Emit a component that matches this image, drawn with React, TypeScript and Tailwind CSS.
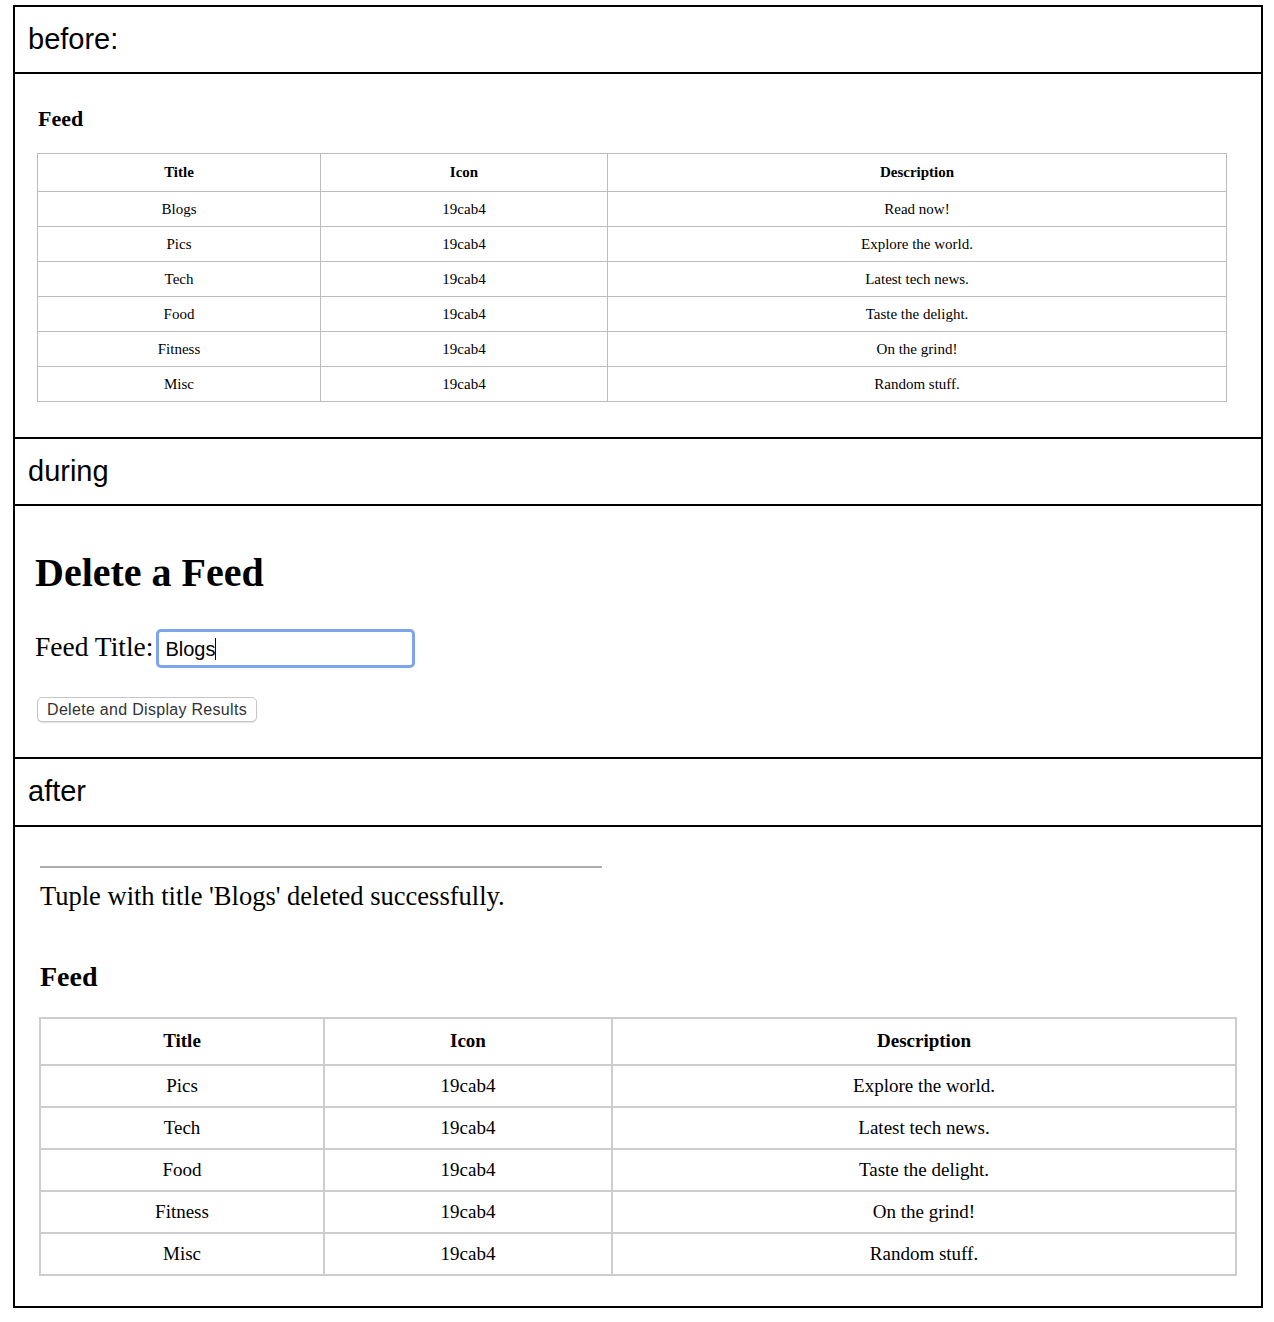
const rowsBefore = [
  { title: "Blogs", icon: "19cab4", desc: "Read now!" },
  { title: "Pics", icon: "19cab4", desc: "Explore the world." },
  { title: "Tech", icon: "19cab4", desc: "Latest tech news." },
  { title: "Food", icon: "19cab4", desc: "Taste the delight." },
  { title: "Fitness", icon: "19cab4", desc: "On the grind!" },
  { title: "Misc", icon: "19cab4", desc: "Random stuff." },
];

const rowsAfter = rowsBefore.slice(1);

function Label({ text, last }: { text: string; last?: boolean }) {
  return (
    <div
      className={
        last
          ? "h-[68px] border-b-2 border-black flex items-center pl-[13px] text-[29px] text-black font-['Liberation_Sans',Arial,sans-serif]"
          : "h-[67px] border-b-2 border-black flex items-center pl-[13px] text-[29px] text-black font-['Liberation_Sans',Arial,sans-serif]"
      }
    >
      {text}
    </div>
  );
}

function SmallFeed() {
  return (
    <table className="table-fixed border-collapse w-[1189px] text-[15px] text-black">
      <colgroup>
        <col className="w-[283px]" />
        <col className="w-[287px]" />
        <col className="w-[619px]" />
      </colgroup>
      <thead>
        <tr className="h-[38px]">
          <th className="border border-[#bcbcbc] font-bold text-center p-0">Title</th>
          <th className="border border-[#bcbcbc] font-bold text-center p-0">Icon</th>
          <th className="border border-[#bcbcbc] font-bold text-center p-0">Description</th>
        </tr>
      </thead>
      <tbody>
        {rowsBefore.map((r) => (
          <tr key={r.title} className="h-[35px]">
            <td className="border border-[#bcbcbc] text-center p-0">{r.title}</td>
            <td className="border border-[#bcbcbc] text-center p-0">{r.icon}</td>
            <td className="border border-[#bcbcbc] text-center p-0">{r.desc}</td>
          </tr>
        ))}
      </tbody>
    </table>
  );
}

function LargeFeed() {
  return (
    <table className="table-fixed border-collapse w-[1196px] text-[19px] text-black">
      <colgroup>
        <col className="w-[284px]" />
        <col className="w-[288px]" />
        <col className="w-[624px]" />
      </colgroup>
      <thead>
        <tr className="h-[47px]">
          <th className="border-2 border-[#cdcdcd] font-bold text-center p-0">Title</th>
          <th className="border-2 border-[#cdcdcd] font-bold text-center p-0">Icon</th>
          <th className="border-2 border-[#cdcdcd] font-bold text-center p-0">Description</th>
        </tr>
      </thead>
      <tbody>
        {rowsAfter.map((r) => (
          <tr key={r.title} className="h-[42px]">
            <td className="border-2 border-[#cdcdcd] text-center p-0">{r.title}</td>
            <td className="border-2 border-[#cdcdcd] text-center p-0">{r.icon}</td>
            <td className="border-2 border-[#cdcdcd] text-center p-0">{r.desc}</td>
          </tr>
        ))}
      </tbody>
    </table>
  );
}

export default function App() {
  return (
    <div className="min-h-[1322px] bg-white pt-[5px] pl-[13px]">
      <div className="w-[1250px] border-2 border-black font-['Liberation_Serif','Times_New_Roman',serif]">
        {/* before */}
        <Label text="before:" />
        <div className="h-[365px] border-b-2 border-black pl-[22px] pt-[32px]">
          <h2 className="text-[22px] font-bold leading-[26px] pl-[1px]">Feed</h2>
          <div className="mt-[21px]">
            <SmallFeed />
          </div>
        </div>

        {/* during */}
        <Label text="during" />
        <div className="h-[253px] border-b-2 border-black pl-[20px] pt-[44px]">
          <h1 className="text-[40px] font-bold leading-[46px]">Delete a Feed</h1>
          <div className="mt-[33px] flex items-center h-[39px]">
            <span className="text-[27.5px] leading-[31px] mr-[3px] mt-[-4px]">Feed Title:</span>
            <div className="w-[259px] h-[39px] rounded-[5px] border-[3px] border-[#7fa4ee] bg-white flex items-center pl-[6px] font-['Liberation_Sans',Arial,sans-serif] text-[20px] text-black">
              <span>Blogs</span>
              <span className="w-px h-[22px] bg-black" />
            </div>
          </div>
          <button className="mt-[29px] ml-[2px] h-[25px] w-[220px] rounded-[5px] border border-[#c6c6c6] bg-white shadow-[0_1px_1px_rgba(0,0,0,0.12)] font-['Liberation_Sans',Arial,sans-serif] text-[16px] tracking-[0.3px] text-[#333] flex items-center justify-center">
            Delete and Display Results
          </button>
        </div>

        {/* after */}
        <Label text="after" last />
        <div className="h-[479px] pl-[25px] pt-[39px]">
          <div className="w-[562px] h-[2px] bg-[#adadad]" />
          <p className="mt-[12px] text-[26.5px] leading-[32px]">Tuple with title 'Blogs' deleted successfully.</p>
          <h2 className="mt-[49px] text-[28px] font-bold leading-[32px]">Feed</h2>
          <div className="mt-[24px] ml-[-1px]">
            <LargeFeed />
          </div>
        </div>
      </div>
    </div>
  );
}
